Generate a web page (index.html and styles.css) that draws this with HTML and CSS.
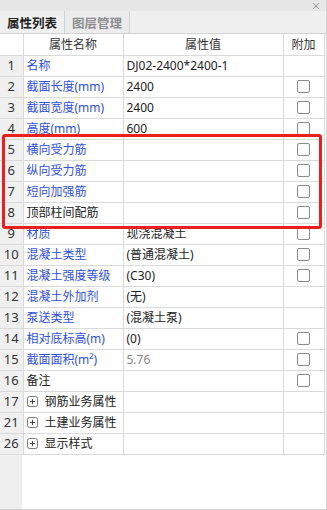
FILE: index.html
```html
<!DOCTYPE html>
<html lang="zh-CN">
<head>
  <meta charset="UTF-8">
  <title>属性列表</title>
  <link rel="stylesheet" href="styles.css">
</head>
<body>
  <div class="panel">
    <div class="title-bar">
      <svg class="close" width="8" height="8" viewBox="0 0 8 8"><path d="M1 1L7 7M7 1L1 7" stroke="#9a9a9a" stroke-width="1"/></svg>
    </div>
    <div class="tabs">
      <div class="tab active">属性列表</div>
      <div class="tab">图层管理</div>
    </div>

    <table class="props">
      <colgroup>
        <col class="c-num"><col class="c-name"><col class="c-val"><col class="c-add">
      </colgroup>
      <thead>
        <tr><th></th><th>属性名称</th><th>属性值</th><th>附加</th></tr>
      </thead>
      <tbody>
        <tr><td class="num">1</td><td class="name">名称</td><td>DJ02-2400*2400-1</td><td></td></tr>
        <tr><td class="num">2</td><td class="name">截面长度(mm)</td><td>2400</td><td><span class="check"></span></td></tr>
        <tr><td class="num">3</td><td class="name">截面宽度(mm)</td><td>2400</td><td><span class="check"></span></td></tr>
        <tr><td class="num">4</td><td class="name">高度(mm)</td><td>600</td><td><span class="check"></span></td></tr>
        <tr><td class="num">5</td><td class="name">横向受力筋</td><td></td><td><span class="check"></span></td></tr>
        <tr><td class="num">6</td><td class="name">纵向受力筋</td><td></td><td><span class="check"></span></td></tr>
        <tr><td class="num">7</td><td class="name">短向加强筋</td><td></td><td><span class="check"></span></td></tr>
        <tr><td class="num">8</td><td class="name plain">顶部柱间配筋</td><td></td><td><span class="check"></span></td></tr>
        <tr><td class="num">9</td><td class="name">材质</td><td>现浇混凝土</td><td><span class="check"></span></td></tr>
        <tr><td class="num">10</td><td class="name">混凝土类型</td><td>(普通混凝土)</td><td><span class="check"></span></td></tr>
        <tr><td class="num">11</td><td class="name">混凝土强度等级</td><td>(C30)</td><td><span class="check"></span></td></tr>
        <tr><td class="num">12</td><td class="name">混凝土外加剂</td><td>(无)</td><td></td></tr>
        <tr><td class="num">13</td><td class="name">泵送类型</td><td>(混凝土泵)</td><td></td></tr>
        <tr><td class="num">14</td><td class="name">相对底标高(m)</td><td>(0)</td><td><span class="check"></span></td></tr>
        <tr><td class="num">15</td><td class="name">截面面积(m²)</td><td class="muted">5.76</td><td><span class="check"></span></td></tr>
        <tr><td class="num">16</td><td class="name plain">备注</td><td></td><td><span class="check"></span></td></tr>
        <tr><td class="num">17</td><td class="name plain"><span class="group"><svg width="11" height="11" viewBox="0 0 11 11"><rect x="0.5" y="0.5" width="10" height="10" rx="2" fill="#fff" stroke="#7a7a7a"/><path d="M3 5.5H8M5.5 3V8" stroke="#444"/></svg>钢筋业务属性</span></td><td></td><td></td></tr>
        <tr><td class="num">21</td><td class="name plain"><span class="group"><svg width="11" height="11" viewBox="0 0 11 11"><rect x="0.5" y="0.5" width="10" height="10" rx="2" fill="#fff" stroke="#7a7a7a"/><path d="M3 5.5H8M5.5 3V8" stroke="#444"/></svg>土建业务属性</span></td><td></td><td></td></tr>
        <tr><td class="num">26</td><td class="name plain"><span class="group"><svg width="11" height="11" viewBox="0 0 11 11"><rect x="0.5" y="0.5" width="10" height="10" rx="2" fill="#fff" stroke="#7a7a7a"/><path d="M3 5.5H8M5.5 3V8" stroke="#444"/></svg>显示样式</span></td><td></td><td></td></tr>
      </tbody>
    </table>

    <div class="filler"><div class="filler-num"></div></div>

    <div class="highlight"></div>
  </div>
</body>
</html>
```

FILE: styles.css
```css
:root {
  --grid: #dadada;
  --num-bg: #f0f0f0;
  --blue: #3050dc;
  --text: #222;
}

* {
  margin: 0;
  padding: 0;
  box-sizing: border-box;
}

body {
  font-family: "Noto Sans", "Noto Sans CJK SC", sans-serif;
  font-size: 12px;
  color: var(--text);
  background: #fff;
}

.panel {
  position: relative;
  width: 327px;
  height: 510px;
  display: flex;
  flex-direction: column;
  border-right: 1px solid #d4d4d4;
  border-bottom: 1px solid #d4d4d4;
}

.title-bar {
  height: 11px;
  background: #e6e6e6;
  display: flex;
  justify-content: flex-end;
  align-items: center;
  padding-right: 6px;
}

.tabs {
  height: 23px;
  display: flex;
  background: #f0f0f0;
  border-bottom: 1px solid #d2d2d2;
}

.tab {
  width: 65px;
  display: flex;
  align-items: center;
  justify-content: center;
  border-right: 1px solid #d2d2d2;
  color: #8e8e8e;
  font-weight: 600;
  font-size: 12.5px;
  background: #ececec;
}

.tab.active {
  color: #222;
  background: #f0f0f0;
}

.props {
  width: 324px;
  border-collapse: collapse;
  table-layout: fixed;
}

.c-num { width: 23px; }
.c-name { width: 100px; }
.c-val { width: 160px; }
.c-add { width: 41px; }

.props th,
.props td {
  height: 21px;
  border: 1px solid var(--grid);
  border-top: none;
  padding: 0 3px;
  white-space: nowrap;
  overflow: hidden;
  line-height: 19px;
}

.props tr > :first-child { border-left: none; }

.props th {
  font-weight: 400;
  text-align: center;
  color: #333;
}

.props td.num {
  background: var(--num-bg);
  text-align: center;
  padding: 0;
  color: #333;
  font-size: 13px;
}

.props td.name { color: var(--blue); }
.props td.name.plain { color: var(--text); }
.props td.muted { color: #888; }

.props td:last-child { text-align: center; }

.check {
  display: inline-block;
  width: 13px;
  height: 13px;
  border: 1px solid #8a8a8a;
  border-radius: 2px;
  vertical-align: middle;
  margin-top: -2px;
}

.group {
  display: inline-flex;
  align-items: center;
  gap: 7px;
}

.filler {
  flex: 1;
  display: flex;
}

.filler-num {
  width: 22px;
  background: var(--num-bg);
}

.highlight {
  position: absolute;
  left: 2px;
  top: 134px;
  width: 320px;
  height: 95px;
  border: 3px solid #ec1f1f;
  border-radius: 3px;
  pointer-events: none;
}
```
